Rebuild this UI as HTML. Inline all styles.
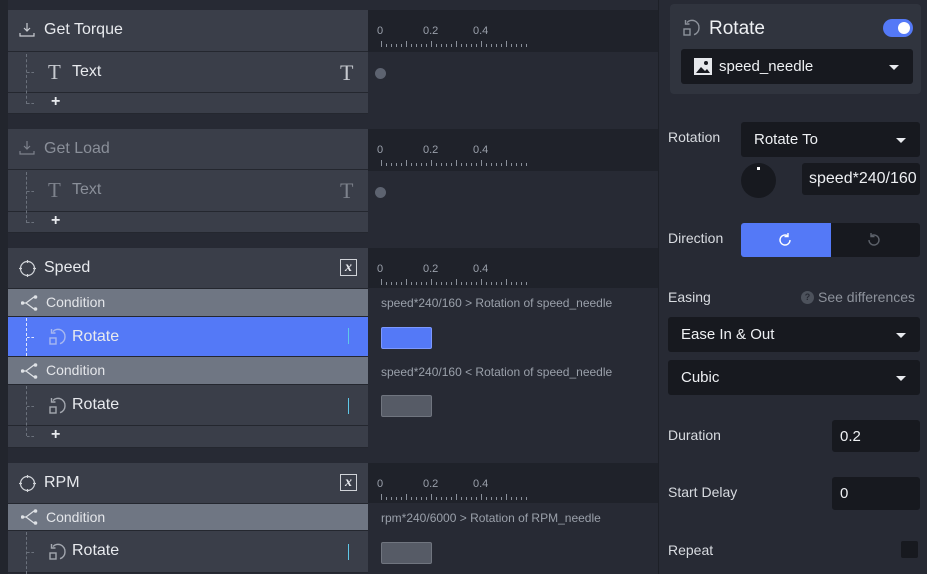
<!DOCTYPE html>
<html><head><meta charset="utf-8"><style>
*{margin:0;padding:0;box-sizing:border-box}
body{width:927px;height:574px;overflow:hidden;background:#272a34;font-family:"Liberation Sans",sans-serif;position:relative;color:#e8eaee}
.a{position:absolute}
.strip{left:0;top:0;width:8px;height:574px;background:#22252d}
.row{position:absolute;left:8px;width:360px;background:#3a3e49;border-bottom:1px solid #24272f}
.hdr{font-size:16px;display:flex;align-items:center}
.cond{background:#6f7683;font-size:14px;color:#e4e6ea;display:flex;align-items:center}
.sel{background:#5479f7}
.lbl{position:absolute;left:36px;font-size:16px}
.ruler{position:absolute;left:368px;width:290px;height:42px;background:#1f222a}
.ruler span{position:absolute;top:15px;font-size:11px;color:#9aa0ab}
.ticks{position:absolute;left:13px;top:34px;width:148px;height:3px;background:repeating-linear-gradient(90deg,#8a909a 0 1px,transparent 1px 5px)}
.major{position:absolute;left:13px;top:31px;width:148px;height:3px;background:repeating-linear-gradient(90deg,#8a909a 0 1px,transparent 1px 25px)}
.dash{position:absolute;border-left:1px dashed #6b717c}
.input{position:absolute;background:#17191f;border-radius:3px;font-size:15px;color:#eef0f3;display:flex;align-items:center;padding-left:13px}
.caret{position:absolute;right:14px;top:50%;margin-top:-2px;border-left:5px solid transparent;border-right:5px solid transparent;border-top:5px solid #e8eaee}
.plab{position:absolute;left:668px;font-size:14px;color:#d8dbe0}
.tl{position:absolute;font-size:12px;color:#9aa0aa;left:381px}
</style></head><body>
<div class="a strip"></div>
<div class="a" style="left:658px;top:0;width:1px;height:574px;background:#1d2027"></div>

<div class="row hdr" style="top:10px;height:42px"><svg class="a" style="left:11px;top:12px" width="16" height="16" viewBox="0 0 16 16" fill="none" stroke="#c9ccd2" stroke-width="1.2"><path d="M8 1v8M5 6l3 3 3-3M1 11v3h14v-3"/></svg><span class="lbl" style="top:11px">Get Torque</span></div>
<div class="row" style="top:52px;height:41px"><span class="a" style="left:40px;top:8px;font-family:'Liberation Serif',serif;font-size:21px;color:#c6c9cf">T</span><span class="lbl" style="left:64px;top:11px">Text</span><span class="a" style="left:332px;top:8px;font-family:'Liberation Serif',serif;font-size:22px;color:#c6c9cf">T</span></div>
<div class="row" style="top:93px;height:21px"><span class="a" style="left:43px;top:0;font-size:16px;font-weight:bold">+</span></div>
<div class="dash" style="left:26px;top:54px;height:50px"></div>
<div class="a" style="left:27px;top:72px;width:7px;border-top:1px dashed #6b717c"></div>
<div class="a" style="left:27px;top:103px;width:7px;border-top:1px dashed #6b717c"></div>

<div class="row hdr" style="top:129px;height:41px;color:#8a8f99"><svg class="a" style="left:11px;top:11px" width="16" height="16" viewBox="0 0 16 16" fill="none" stroke="#7d828c" stroke-width="1.2"><path d="M8 1v8M5 6l3 3 3-3M1 11v3h14v-3"/></svg><span class="lbl" style="top:11px">Get Load</span></div>
<div class="row" style="top:170px;height:42px;color:#8a8f99"><span class="a" style="left:40px;top:8px;font-family:'Liberation Serif',serif;font-size:21px;color:#7d828c">T</span><span class="lbl" style="left:64px;top:11px">Text</span><span class="a" style="left:332px;top:8px;font-family:'Liberation Serif',serif;font-size:22px;color:#7d828c">T</span></div>
<div class="row" style="top:212px;height:21px"><span class="a" style="left:43px;top:0;font-size:16px;font-weight:bold">+</span></div>
<div class="dash" style="left:26px;top:172px;height:51px"></div>
<div class="a" style="left:27px;top:191px;width:7px;border-top:1px dashed #6b717c"></div>
<div class="a" style="left:27px;top:222px;width:7px;border-top:1px dashed #6b717c"></div>

<div class="row hdr" style="top:248px;height:41px"><svg class="a" style="left:11px;top:12px" width="17" height="17" viewBox="0 0 17 17" fill="none" stroke="#d0d3d8" stroke-width="1.2"><circle cx="8.5" cy="8.5" r="7"/><path d="M8.5 0v3M8.5 14v3M0 8.5h3M14 8.5h3"/></svg><span class="lbl" style="top:11px">Speed</span><span class="a" style="left:332px;top:11px;width:17px;height:17px;border:1px solid #d0d3d8;font-family:'Liberation Serif',serif;font-style:italic;font-weight:bold;font-size:14px;text-align:center;line-height:15px">x</span></div>
<div class="row cond" style="top:289px;height:28px"><svg class="a" style="left:13px;top:6px" width="18" height="16" viewBox="0 0 18 16" fill="none" stroke="#dfe2e6" stroke-width="1.2"><path d="M1 8h4l8-6M5 8l8 6"/><circle cx="1.5" cy="8" r="1.2" fill="#dfe2e6"/><circle cx="14.5" cy="2" r="1.2" fill="#dfe2e6"/><circle cx="14.5" cy="14" r="1.2" fill="#dfe2e6"/></svg><span class="a" style="left:38px;top:5px">Condition</span></div>
<div class="row sel" style="top:317px;height:40px"><svg class="a" style="left:40px;top:10px" width="20" height="20" viewBox="0 0 20 20" fill="none" stroke="#a8b8f0" stroke-width="1.4"><path d="M5 4.5A7 7 0 0 1 17 10a7 7 0 0 1-5 6.7"/><path d="M3.5 2v4h4"/><rect x="2" y="11" width="6" height="6"/></svg><span class="lbl" style="left:64px;top:11px;font-size:16px">Rotate</span><div class="a" style="left:340px;top:11px;width:1px;height:16px;background:#5fc8e8"></div></div>
<div class="row cond" style="top:357px;height:28px"><svg class="a" style="left:13px;top:6px" width="18" height="16" viewBox="0 0 18 16" fill="none" stroke="#dfe2e6" stroke-width="1.2"><path d="M1 8h4l8-6M5 8l8 6"/><circle cx="1.5" cy="8" r="1.2" fill="#dfe2e6"/><circle cx="14.5" cy="2" r="1.2" fill="#dfe2e6"/><circle cx="14.5" cy="14" r="1.2" fill="#dfe2e6"/></svg><span class="a" style="left:38px;top:5px">Condition</span></div>
<div class="row" style="top:385px;height:41px"><svg class="a" style="left:40px;top:11px" width="20" height="20" viewBox="0 0 20 20" fill="none" stroke="#a3a7af" stroke-width="1.4"><path d="M5 4.5A7 7 0 0 1 17 10a7 7 0 0 1-5 6.7"/><path d="M3.5 2v4h4"/><rect x="2" y="11" width="6" height="6"/></svg><span class="lbl" style="left:64px;top:11px;font-size:16px">Rotate</span><div class="a" style="left:340px;top:13px;width:1px;height:16px;background:#5fc8e8"></div></div>
<div class="row" style="top:426px;height:22px"><span class="a" style="left:43px;top:0;font-size:16px;font-weight:bold">+</span></div>
<div class="dash" style="left:26px;top:318px;height:38px;border-color:#dfe5ff"></div>
<div class="a" style="left:27px;top:337px;width:7px;border-top:1px dashed #dfe5ff"></div>
<div class="dash" style="left:26px;top:386px;height:50px"></div>
<div class="a" style="left:27px;top:406px;width:7px;border-top:1px dashed #6b717c"></div>
<div class="a" style="left:27px;top:436px;width:7px;border-top:1px dashed #6b717c"></div>

<div class="row hdr" style="top:463px;height:41px"><svg class="a" style="left:11px;top:12px" width="17" height="17" viewBox="0 0 17 17" fill="none" stroke="#d0d3d8" stroke-width="1.2"><circle cx="8.5" cy="8.5" r="7"/><path d="M8.5 0v3M8.5 14v3M0 8.5h3M14 8.5h3"/></svg><span class="lbl" style="top:11px">RPM</span><span class="a" style="left:332px;top:11px;width:17px;height:17px;border:1px solid #d0d3d8;font-family:'Liberation Serif',serif;font-style:italic;font-weight:bold;font-size:14px;text-align:center;line-height:15px">x</span></div>
<div class="row cond" style="top:504px;height:27px"><svg class="a" style="left:13px;top:5px" width="18" height="16" viewBox="0 0 18 16" fill="none" stroke="#dfe2e6" stroke-width="1.2"><path d="M1 8h4l8-6M5 8l8 6"/><circle cx="1.5" cy="8" r="1.2" fill="#dfe2e6"/><circle cx="14.5" cy="2" r="1.2" fill="#dfe2e6"/><circle cx="14.5" cy="14" r="1.2" fill="#dfe2e6"/></svg><span class="a" style="left:38px;top:5px">Condition</span></div>
<div class="row" style="top:531px;height:42px"><svg class="a" style="left:40px;top:11px" width="20" height="20" viewBox="0 0 20 20" fill="none" stroke="#a3a7af" stroke-width="1.4"><path d="M5 4.5A7 7 0 0 1 17 10a7 7 0 0 1-5 6.7"/><path d="M3.5 2v4h4"/><rect x="2" y="11" width="6" height="6"/></svg><span class="lbl" style="left:64px;top:11px;font-size:16px">Rotate</span><div class="a" style="left:340px;top:13px;width:1px;height:16px;background:#5fc8e8"></div></div>
<div class="dash" style="left:26px;top:532px;height:42px"></div>
<div class="a" style="left:27px;top:552px;width:7px;border-top:1px dashed #6b717c"></div>

<div class="ruler" style="top:10px"><span style="left:9px">0</span><span style="left:55px">0.2</span><span style="left:105px">0.4</span><div class="ticks"></div><div class="major"></div></div>
<div class="ruler" style="top:129px"><span style="left:9px">0</span><span style="left:55px">0.2</span><span style="left:105px">0.4</span><div class="ticks"></div><div class="major"></div></div>
<div class="ruler" style="top:248px;height:40px"><span style="left:9px">0</span><span style="left:55px">0.2</span><span style="left:105px">0.4</span><div class="ticks"></div><div class="major"></div></div>
<div class="ruler" style="top:463px;height:40px"><span style="left:9px">0</span><span style="left:55px">0.2</span><span style="left:105px">0.4</span><div class="ticks"></div><div class="major"></div></div>
<div class="a" style="left:375px;top:68px;width:11px;height:11px;border-radius:50%;background:#5d6370"></div>
<div class="a" style="left:375px;top:187px;width:11px;height:11px;border-radius:50%;background:#5d6370"></div>
<div class="tl" style="top:296px">speed*240/160 &gt; Rotation of speed_needle</div>
<div class="a" style="left:381px;top:327px;width:51px;height:22px;border-radius:2px;background:#5479f7;border:1px solid #7c98ff"></div>
<div class="tl" style="top:365px">speed*240/160 &lt; Rotation of speed_needle</div>
<div class="a" style="left:381px;top:395px;width:51px;height:22px;border-radius:2px;background:#565b66;border:1px solid #70757f"></div>
<div class="tl" style="top:511px">rpm*240/6000 &gt; Rotation of RPM_needle</div>
<div class="a" style="left:381px;top:542px;width:51px;height:22px;border-radius:2px;background:#565b66;border:1px solid #70757f"></div>

<div class="a" style="left:670px;top:4px;width:251px;height:90px;background:#30343e;border-radius:4px"></div>
<svg class="a" style="left:682px;top:18px" width="20" height="20" viewBox="0 0 20 20" fill="none" stroke="#8d929b" stroke-width="1.4"><path d="M5 4.5A7 7 0 0 1 17 10a7 7 0 0 1-5 6.7"/><path d="M3.5 2v4h4"/><rect x="2" y="11" width="6" height="6"/></svg>
<div class="a" style="left:709px;top:18px;font-size:19px;color:#eef0f3">Rotate</div>
<div class="a" style="left:883px;top:19px;width:30px;height:18px;border-radius:9px;background:#5479f7"><div class="a" style="right:3px;top:3px;width:12px;height:12px;border-radius:50%;background:#fff"></div></div>
<div class="input" style="left:681px;top:49px;width:232px;height:35px"><svg width="18" height="17" viewBox="0 0 18 17" style="margin-right:7px"><rect width="18" height="17" fill="#e6e8ec"/><path d="M2 15l5-6 4 4 2-2 3 4z" fill="#17191f"/><circle cx="12" cy="5" r="2" fill="#17191f"/></svg>speed_needle<div class="caret"></div></div>

<div class="plab" style="top:129px">Rotation</div>
<div class="input" style="left:741px;top:122px;width:179px;height:35px">Rotate To<div class="caret"></div></div>
<div class="a" style="left:741px;top:163px;width:35px;height:35px;border-radius:50%;background:#17191f"><div class="a" style="left:16px;top:4px;width:3px;height:3px;background:#fff"></div></div>
<div class="input" style="left:802px;top:163px;width:118px;height:32px;padding-left:7px;overflow:hidden;white-space:nowrap;font-size:16px">speed*240/160</div>

<div class="plab" style="top:230px">Direction</div>
<div class="a" style="left:741px;top:223px;width:90px;height:34px;background:#5479f7;border-radius:3px 0 0 3px"></div>
<svg class="a" style="left:777px;top:232px" width="16" height="16" viewBox="0 0 16 16" fill="none" stroke="#fff" stroke-width="1.4"><path d="M13 8a5 5 0 1 1-2-4"/><path d="M11 1v3.5h-3.5" /></svg>
<div class="a" style="left:831px;top:223px;width:89px;height:34px;background:#17191f;border-radius:0 3px 3px 0"></div>
<svg class="a" style="left:866px;top:232px" width="16" height="16" viewBox="0 0 16 16" fill="none" stroke="#5d626b" stroke-width="1.4"><path d="M3 8a5 5 0 1 0 2-4"/><path d="M5 1v3.5h3.5"/></svg>

<div class="plab" style="top:289px">Easing</div>
<div class="a" style="left:801px;top:291px;width:13px;height:13px;border-radius:50%;background:#4d525c;font-size:9px;color:#272a34;text-align:center;line-height:13px;font-weight:bold">?</div>
<div class="a" style="left:818px;top:289px;font-size:14px;color:#8d929b">See differences</div>
<div class="input" style="left:668px;top:317px;width:252px;height:35px">Ease In &amp; Out<div class="caret"></div></div>
<div class="input" style="left:668px;top:360px;width:252px;height:35px">Cubic<div class="caret"></div></div>

<div class="plab" style="top:427px">Duration</div>
<div class="input" style="left:832px;top:420px;width:88px;height:32px;padding-left:8px">0.2</div>
<div class="plab" style="top:484px">Start Delay</div>
<div class="input" style="left:832px;top:477px;width:88px;height:33px;padding-left:8px">0</div>
<div class="plab" style="top:542px">Repeat</div>
<div class="a" style="left:901px;top:541px;width:17px;height:17px;background:#17191f;border-radius:2px"></div>
</body></html>
